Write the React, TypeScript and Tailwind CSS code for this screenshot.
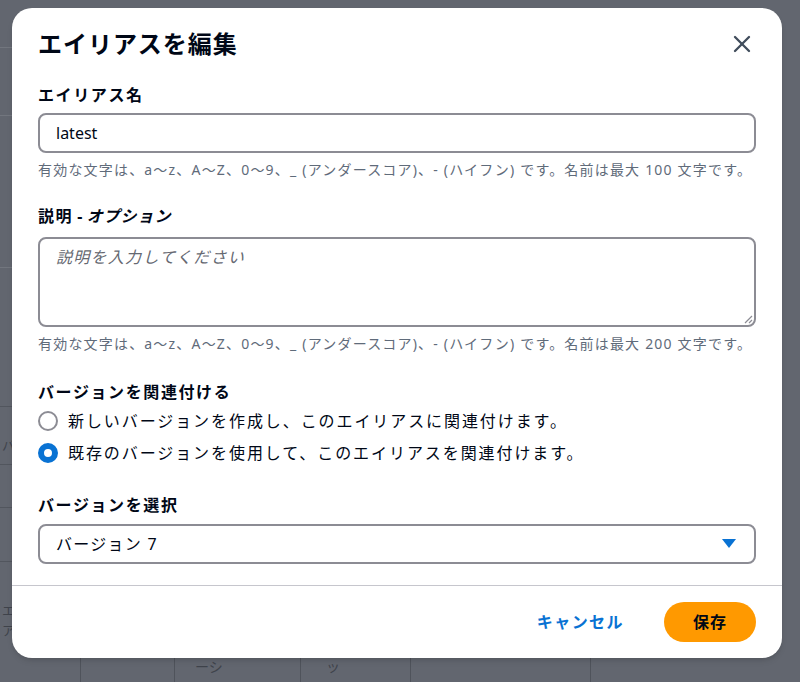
import { X } from "lucide-react";

const font = { fontFamily: '"Noto Sans", "Noto Sans CJK JP", sans-serif' };

// dimmed page that sits behind the dialog
function Backdrop() {
  return (
    <div className="absolute inset-0 bg-[#62666f] flex flex-col text-[#3f434b]">
      <div className="flex-1 flex">
        <div className="w-[12px] flex flex-col">
          <div className="h-[48px] border-b border-[#72767e]" />
          <div className="h-[68px] border-b border-[#72767e]" />
          <div className="h-[152px] border-b border-[#72767e]" />
          <div className="h-[139px] border-b border-[#52565e]" />
          <div className="h-[58px] border-b border-[#52565e] text-[13px] leading-[20px] pl-[2px] pt-[28px]">バ</div>
          <div className="h-[43px] border-b border-[#52565e]" />
          <div className="h-[54px] border-b border-[#52565e]" />
          <div className="text-[13px] leading-[20px] pl-[2px] pt-[38px]">
            エ<br />ア
          </div>
        </div>
      </div>
      <div className="h-[24px] flex text-[14px] leading-[18px]">
        <div className="w-[80px]" />
        <div className="w-[94px] border-l border-[#4f535b]" />
        <div className="w-[126px] border-l border-[#4f535b] pl-[20px]">ーシ</div>
        <div className="w-[110px] border-l border-[#4f535b] pl-[25px]">ッ</div>
        <div className="w-[180px] border-l border-[#4f535b]" />
        <div className="flex-1 border-l border-[#4f535b]" />
      </div>
    </div>
  );
}

function Label({ children }: { children: React.ReactNode }) {
  return (
    <div className="text-[16px] font-bold leading-[22px] tracking-[0.1em] text-[#000716]">{children}</div>
  );
}

function Help({ children }: { children: React.ReactNode }) {
  return (
    <div className="mt-[7px] text-[14px] leading-[20px] tracking-[0.085em] text-[#5f6b7a] whitespace-nowrap">
      {children}
    </div>
  );
}

function Radio({ checked, label }: { checked?: boolean; label: string }) {
  return (
    <label className="flex items-center gap-[10px] h-[32px]">
      {checked ? (
        <span className="w-[20px] h-[20px] rounded-full border-[6px] border-[#0972d3] bg-white" />
      ) : (
        <span className="w-[20px] h-[20px] rounded-full border-2 border-[#8c8c94] bg-white" />
      )}
      <span className="text-[16px] tracking-[0.12em] text-[#000716]">{label}</span>
    </label>
  );
}

export default function App() {
  return (
    <main className="relative w-[800px] h-[682px] overflow-hidden" style={font}>
      <Backdrop />
      <div className="relative pt-[8px] px-[12px]">
        <div className="w-[770px] rounded-[20px] bg-white shadow-md">
          <header className="flex items-center justify-between pl-[26px] pr-[26px] pt-[20px]">
            <h1 className="text-[24px] font-bold leading-[32px] tracking-[0.04em] text-[#000716]">
              エイリアスを編集
            </h1>
            <X className="w-[28px] h-[28px] text-[#414d5c]" strokeWidth={2} />
          </header>

          <div className="px-[26px] pt-[24px]">
            <Label>エイリアス名</Label>
            <div className="mt-[7px] h-[40px] rounded-[8px] border-2 border-[#8c8c94] flex items-center px-[16px] text-[16px] text-[#000716]">
              latest
            </div>
            <Help>有効な文字は、a〜z、A〜Z、0〜9、_ (アンダースコア)、- (ハイフン) です。名前は最大 100 文字です。</Help>

            <div className="mt-[25px] text-[16px] font-bold leading-[22px] text-[#000716]">
              <span className="tracking-[0.1em]">説明</span> - <i className="tracking-[0.06em]">オプション</i>
            </div>
            <div className="relative mt-[10px] h-[90px] rounded-[8px] border-2 border-[#8c8c94] px-[16px] pt-[6px] text-[16px] italic tracking-[0.08em] text-[#656871]">
              説明を入力してください
              <svg className="absolute right-[1px] bottom-[1px]" width="10" height="10" viewBox="0 0 10 10">
                <path d="M9 2 L2 9 M9 6 L6 9" stroke="#8c8c94" strokeWidth="1.2" />
              </svg>
            </div>
            <Help>有効な文字は、a〜z、A〜Z、0〜9、_ (アンダースコア)、- (ハイフン) です。名前は最大 200 文字です。</Help>

            <div className="mt-[27px]">
              <Label>バージョンを関連付ける</Label>
            </div>
            <div className="mt-[2px] flex flex-col">
              <Radio label="新しいバージョンを作成し、このエイリアスに関連付けます。" />
              <Radio checked label="既存のバージョンを使用して、このエイリアスを関連付けます。" />
            </div>

            <div className="mt-[25px]">
              <Label>バージョンを選択</Label>
            </div>
            <div className="mt-[8px] h-[40px] rounded-[8px] border-2 border-[#8c8c94] flex items-center justify-between pl-[16px] pr-[18px] text-[16px] tracking-[0.08em] text-[#000716]">
              <span>バージョン 7</span>
              <svg width="14" height="10" viewBox="0 0 14 10">
                <path d="M0 0 H14 L7 9 Z" fill="#0972d3" />
              </svg>
            </div>
          </div>

          <div className="mt-[21px] h-px bg-[#c6c6cd]" />

          <footer className="flex items-center justify-end gap-[40px] px-[26px] pt-[16px] pb-[16px]">
            <button className="text-[16px] font-bold tracking-[0.09em] text-[#0972d3]">キャンセル</button>
            <button className="h-[40px] w-[92px] rounded-full bg-[#ff9900] text-[16px] font-bold tracking-[0.06em] text-[#000716]">
              保存
            </button>
          </footer>
        </div>
      </div>
    </main>
  );
}
